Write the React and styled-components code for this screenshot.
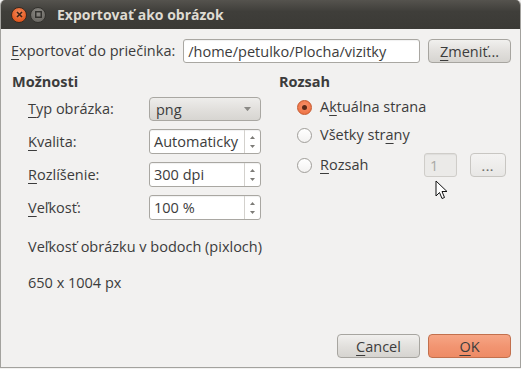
import { createGlobalStyle, styled, css } from "styled-components";

const GlobalStyle = createGlobalStyle`
  html, body {
    margin: 0;
    padding: 0;
    background: #f2f1f0;
  }
  body {
    font-family: "Open Sans", "DejaVu Sans", sans-serif;
    font-size: 14.5px;
    color: #3c3c3c;
  }
`;

const Window = styled.div`
  position: relative;
  width: 521px;
  height: 368px;
  box-sizing: border-box;
  display: flex;
  flex-direction: column;
  background: #f2f1f0;
  border-left: 1px solid #a3a29e;
  border-right: 1px solid #a3a29e;
  border-bottom: 1px solid #a3a29e;
  border-radius: 5px 5px 0 0;
  overflow: hidden;
`;

const TitleBar = styled.div`
  height: 29px;
  flex: none;
  display: flex;
  align-items: center;
  gap: 3px;
  padding-left: 11px;
  background: linear-gradient(#55534e, #3f3e3a 40%, #3b3a36);
  margin: 0 -1px;
`;

const WinButton = styled.span`
  width: 16px;
  height: 16px;
  border-radius: 50%;
  display: flex;
  align-items: center;
  justify-content: center;
  box-sizing: border-box;
  ${({ $close }) =>
    $close
      ? css`
          background: radial-gradient(circle at 50% 35%, #f58a5b, #e35a22 70%);
          border: 1px solid #3a2a20;
        `
      : css`
          background: radial-gradient(circle at 50% 35%, #8c8a85, #6d6b66 70%);
          border: 1px solid #33322e;
        `}
`;

const Title = styled.span`
  margin-left: 8px;
  font-weight: 700;
  font-size: 14px;
  color: #dfdbd2;
`;

const Body = styled.div`
  flex: 1;
  display: flex;
  flex-direction: column;
  padding: 10px 9px 9px 10px;
`;

const PathRow = styled.div`
  display: flex;
  align-items: center;
  height: 24px;
`;

const Label = styled.span`
  white-space: nowrap;
  line-height: 20px;
`;

const Mn = styled.span`
  text-decoration: underline;
  text-underline-offset: 3px;
  text-decoration-thickness: 1px;
`;

const Entry = styled.div`
  box-sizing: border-box;
  height: ${({ $h }) => $h || 24}px;
  width: ${({ $w }) => ($w ? `${$w}px` : "auto")};
  flex: ${({ $w }) => ($w ? "none" : 1)};
  display: flex;
  align-items: stretch;
  border: 1px solid ${({ $disabled }) => ($disabled ? "#cfcdc9" : "#a9a7a2")};
  border-radius: 3px;
  background: ${({ $disabled }) => ($disabled ? "#ebeae8" : "#ffffff")};
  color: ${({ $disabled }) => ($disabled ? "#a9a8a5" : "#3c3c3c")};
  box-shadow: inset 0 1px 1px rgba(0, 0, 0, 0.06);
  overflow: hidden;
`;

const EntryText = styled.span`
  flex: 1;
  display: flex;
  align-items: center;
  padding-left: ${({ $pl }) => ($pl != null ? $pl : 4)}px;
  white-space: nowrap;
  overflow: hidden;
`;

const SpinArrows = styled.span`
  width: 15px;
  flex: none;
  border-left: 1px solid #d3d1cd;
  display: flex;
  flex-direction: column;
  align-items: center;
  justify-content: center;
  gap: 6px;
`;

const Button = styled.button`
  box-sizing: border-box;
  height: 24px;
  width: ${({ $w }) => $w}px;
  flex: none;
  padding: 0;
  font: inherit;
  border-radius: 4px;
  display: flex;
  align-items: center;
  justify-content: center;
  ${({ $primary }) =>
    $primary
      ? css`
          color: #3c3c3c;
          border: 1px solid #c2704d;
          background: linear-gradient(#f6a685, #f29572 50%, #ee8b65);
        `
      : css`
          color: #3c3c3c;
          border: 1px solid #a7a5a0;
          background: linear-gradient(#f1f0ee, #e2e0dd 50%, #d6d4d0);
        `}
  ${({ $muted }) =>
    $muted &&
    css`
      border-color: #c8c6c2;
      background: linear-gradient(#f4f3f2, #e8e7e5);
      color: #6f6e6a;
    `}
`;

const Columns = styled.div`
  display: grid;
  grid-template-columns: 267px 1fr;
  margin-top: 9px;
`;

const Heading = styled.div`
  font-weight: 700;
  line-height: 20px;
  height: 20px;
  padding-left: 1px;
`;

const FormGrid = styled.div`
  display: grid;
  grid-template-columns: 121px 112px;
  grid-template-rows: 24px 25px 25px 25px;
  row-gap: 8px;
  align-items: center;
  padding-left: 17px;
  margin-top: 5px;
`;

const Combo = styled.div`
  box-sizing: border-box;
  height: 24px;
  display: flex;
  align-items: center;
  justify-content: space-between;
  padding: 0 9px 0 6px;
  border: 1px solid #a9a7a2;
  border-radius: 4px;
  background: linear-gradient(#eeedeb, #e2e0dd 50%, #d7d5d1);
`;

const Info = styled.div`
  padding-left: 17px;
  line-height: 20px;
  margin-top: ${({ $mt }) => $mt}px;
`;

const RadioList = styled.div`
  display: flex;
  flex-direction: column;
  gap: 4px;
  margin-top: 3px;
  padding-left: 19px;
`;

const RadioRow = styled.div`
  display: grid;
  grid-template-columns: 23px 104px auto auto;
  align-items: center;
  height: 24px;
`;

const Radio = styled.span`
  box-sizing: border-box;
  width: 15px;
  height: 15px;
  border-radius: 50%;
  display: flex;
  align-items: center;
  justify-content: center;
  ${({ $on }) =>
    $on
      ? css`
          border: 1px solid #c5582d;
          background: radial-gradient(circle at 50% 40%, #f7926a, #ec6a3b);
        `
      : css`
          border: 1px solid #a09e9a;
          background: linear-gradient(#ffffff, #f3f2f1);
        `}
`;

const Dot = styled.span`
  width: 5px;
  height: 5px;
  border-radius: 50%;
  background: #5a2a18;
`;

const Dots = styled.span`
  font-size: 11px;
  letter-spacing: 1px;
  font-weight: 700;
  margin-top: 2px;
`;

const Footer = styled.div`
  margin-top: auto;
  display: flex;
  justify-content: flex-end;
  gap: 8px;
`;

const Cursor = styled.svg`
  position: absolute;
  left: 434px;
  top: 180px;
`;

function Tri({ up, size = 5, color = "#7c7b77" }) {
  const h = size * 0.6;
  return (
    <svg width={size} height={h} viewBox={`0 0 ${size} ${h}`}>
      <polygon
        points={up ? `0,${h} ${size / 2},0 ${size},${h}` : `0,0 ${size},0 ${size / 2},${h}`}
        fill={color}
      />
    </svg>
  );
}

function Spin({ value, h = 25 }) {
  return (
    <Entry $h={h}>
      <EntryText>{value}</EntryText>
      <SpinArrows>
        <Tri up />
        <Tri />
      </SpinArrows>
    </Entry>
  );
}

export default function App() {
  return (
    <>
      <GlobalStyle />
      <Window>
        <TitleBar>
          <WinButton $close>
            <svg width="7" height="7" viewBox="0 0 7 7">
              <path d="M1 1L6 6M6 1L1 6" stroke="#3b2418" strokeWidth="1.6" />
            </svg>
          </WinButton>
          <WinButton>
            <svg width="7" height="7" viewBox="0 0 7 7">
              <rect x="0.75" y="0.75" width="5.5" height="5.5" fill="none" stroke="#2f2e2b" strokeWidth="1.4" />
            </svg>
          </WinButton>
          <Title>Exportovať ako obrázok</Title>
        </TitleBar>
        <Body>
          <PathRow>
            <Label>
              <Mn>E</Mn>xportovať do priečinka:
            </Label>
            <Entry style={{ marginLeft: 8 }}>
              <EntryText>/home/petulko/Plocha/vizitky</EntryText>
            </Entry>
            <Button $w={83} style={{ marginLeft: 8 }}>
              <span>
                <Mn>Z</Mn>meniť...
              </span>
            </Button>
          </PathRow>

          <Columns>
            <div>
              <Heading>Možnosti</Heading>
              <FormGrid>
                <Label>
                  <Mn>T</Mn>yp obrázka:
                </Label>
                <Combo>
                  <span>png</span>
                  <Tri size={7} color="#8a8985" />
                </Combo>
                <Label>
                  <Mn>K</Mn>valita:
                </Label>
                <Spin value="Automaticky" />
                <Label>
                  <Mn>R</Mn>ozlíšenie:
                </Label>
                <Spin value="300 dpi" />
                <Label>
                  <Mn>V</Mn>eľkosť:
                </Label>
                <Spin value="100 %" />
              </FormGrid>
              <Info $mt={17}>Veľkosť obrázku v bodoch (pixloch)</Info>
              <Info $mt={16}>650 x 1004 px</Info>
            </div>
            <div>
              <Heading>Rozsah</Heading>
              <RadioList>
                <RadioRow>
                  <Radio $on>
                    <Dot />
                  </Radio>
                  <Label>
                    A<Mn>k</Mn>tuálna strana
                  </Label>
                </RadioRow>
                <RadioRow>
                  <Radio />
                  <Label>
                    Všetky str<Mn>a</Mn>ny
                  </Label>
                </RadioRow>
                <RadioRow style={{ marginTop: 2 }}>
                  <Radio />
                  <Label>
                    <Mn>R</Mn>ozsah
                  </Label>
                  <Entry $w={33} $disabled>
                    <EntryText $pl={5}>1</EntryText>
                  </Entry>
                  <Button $w={36} $muted style={{ marginLeft: 8 }}>
                    <Dots>...</Dots>
                  </Button>
                </RadioRow>
              </RadioList>
            </div>
          </Columns>

          <Footer>
            <Button $w={83}>
              <span>
                <Mn>C</Mn>ancel
              </span>
            </Button>
            <Button $w={83} $primary>
              <span>
                <Mn>O</Mn>K
              </span>
            </Button>
          </Footer>
        </Body>
        <Cursor width="13" height="21" viewBox="0 0 13 21">
          <path
            d="M1 1 L1 16 L4.5 12.5 L7 18.5 L9.5 17.5 L7 11.5 L12 11.5 Z"
            fill="#ffffff"
            stroke="#111111"
            strokeWidth="1"
            strokeLinejoin="round"
          />
        </Cursor>
      </Window>
    </>
  );
}
